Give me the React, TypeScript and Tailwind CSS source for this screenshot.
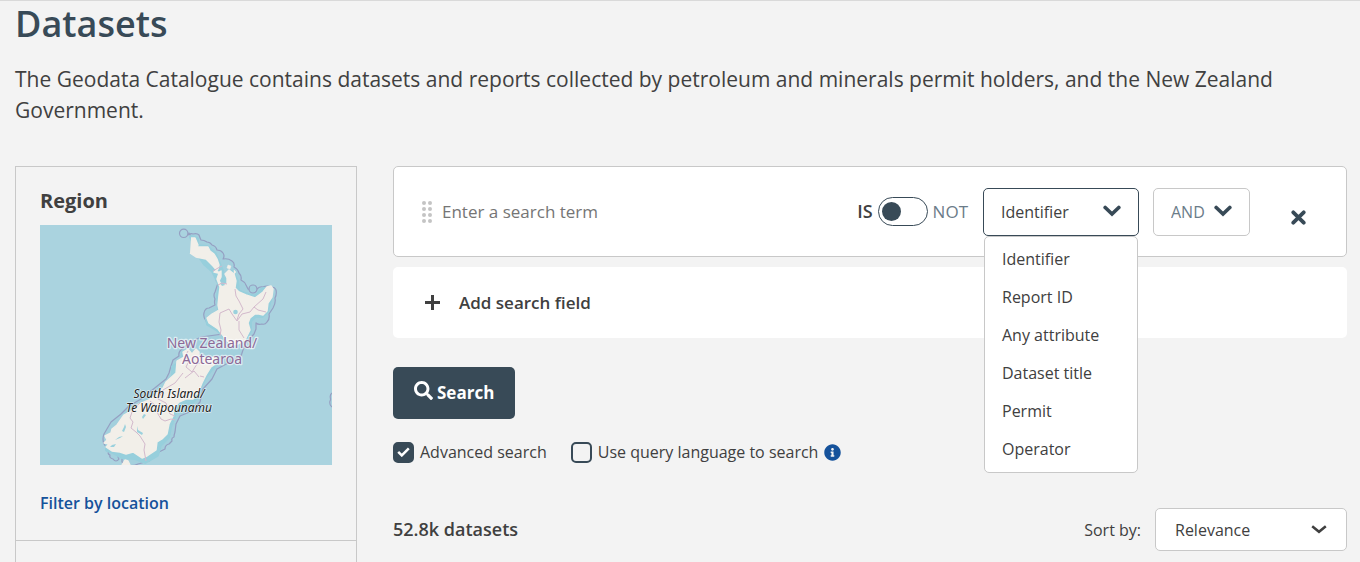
import { useState } from "react";
import { FaInfoCircle, FaSearch } from "react-icons/fa";

const FIELDS = ["Identifier", "Report ID", "Any attribute", "Dataset title", "Permit", "Operator"];

function Chevron({ className }: { className: string }) {
  return (
    <svg viewBox="0 0 18 12" fill="none" stroke="currentColor" className={className} aria-hidden="true">
      <path d="M2.2 2.5 9 9 15.8 2.5" strokeWidth="3.7" strokeLinecap="round" />
    </svg>
  );
}

function RegionMap() {
  return (
    <svg viewBox="0 0 292 240" className="block w-full" role="img" aria-label="Map of New Zealand">
      <rect width="292" height="240" fill="#aad3df" />
      {/* maritime boundary */}
      <g fill="#a3d0dd" stroke="#959fc2" strokeWidth="1.2" strokeLinejoin="round">
        <path d="M148 10q3-2 5-1 4-1 6 1 1 3 2 5 3 0 6 2 3 0 5 3 4 1 5 5 4 0 6 3 2 3 0 6 5-1 9 2 3 2 2 6 4 2 5 6 3 3 2 7 4 2 5 5l2 4q4 2 9 0 3-3 6-2 4-2 8 0 4 0 5 3 1 4-1 8 1 5-2 10l-4 6q1 5-2 8-2 3-5 2-4 1-6-1l0 6-2 5-9 10-4 12-11 6-13 7-5 10-9 10-3 13-8 9-12 5-4 8-1 8q-1 3-1 5-3 1-2 4l-3 3q-4 1-4 5l-6 3q-2 4-6 5l-4 4-11 3q-9 4-16-2l0-3q2-4-3-5-2 2 0 5-3 4-6 0-4-1-3-4-3-1-1-4l-5-7q-2-5 0-10l7-12 10-8 8-8 12-7 15-12 10-8 3-6 2-7 2-6 6-4q-1-4 3-7l7-6 12-6 22-3-9-7-8-6q-3-4-2-8 1-5 5-5l6-3q-1-3 0-6-2-4 0-7l3-9q-3-3-2-6-1-4-2-5-3-1-3-4l-7-6-9-15q-2-2-1-5l-5-9z" />
        <circle cx="143.7" cy="8.3" r="4.2" fill="#aad3df" />
        <circle cx="213" cy="64" r="4" />
      </g>
      {/* shallow water around the coast, then the land itself */}
      <g strokeLinejoin="round">
        <g stroke="#97cfdc" strokeWidth="4" fill="#97cfdc">
          <path d="m151 12 6 2 0 7 10 1 8 7 5 12 2 5 1 8 4 3 0-8 5-2 5 9 1 10 7 3 10 3 8-8 7 0 1 7-4 15-5 5-7 0-5 5 0 10-5 8-8 3-7 2-5-7-7-7-10-6-1-5 6-4 6-4-1-15 2-10-3-7-4-8-8-7-7-10-3-8z" />
          <path d="m143 127 5-1 7 6 10 3 10-2-2 9-8 10-5 10-3 10-5 5-14 3-3 8-5 14-2 10-8 8-3 10-12 7-10-4-13-1-7-4-8-3 1-12 12-11 12-12 13-8 17-17 11-13 0-10 9-5z" />
        </g>
        <g fill="#f2efe9" stroke="#f2efe9" strokeWidth="1.4">
          <path d="m151 13 4 0 3 7-1 2 5 0 6 0 2 4 4 3 3 5 2 6-1 4-4 3 4 1 3-2 0 6-2 4 3 4 5-1 0-6-2-4 4-4 5 4 2 7-1 7 4 4 7 3 9 3 8-6 4-5 4-1 2 3-1 8-4 6-1 8-4 4-4-1-4 0-5 4-2 5 2 7-5 10-7 4-7 1-6-7-7-9-9-6-2-5 5-4 7-4-1-5 1-10 1-8-3-8 2-6-6-7-7-7-10-2-6-4-5z" />
          <path d="m143 127 5-3 4 5 4-5 3 3 0 7 3-2 4 2 10-2-2 8-3 2-5 8-4 8-4 10-5 6-7 0-7 3-5 6-1 8-4 8-2 10-5 5-5 3-1 8-9 6-5 2-9-6-7 2-6-2-8-1-6-4 3-3-5-1 3-3-2-4 6-3 1-4 5-4 7-10 7-4 6-6 12-5 14-12 3-6 10-9 1-12 7-4z" />
          <path d="m82 240 3-5 3 1 2 4z" />
          <path d="m188 40 3 1-1 3-3-1zM194 45l2 2-2 2z" strokeWidth="0.5" />
        </g>
      </g>
      {/* lakes and fjords */}
      <g fill="#9bd1dd">
        <circle cx="195.5" cy="87" r="2.3" />
        <path d="m180 58 3-1 2 3-3 1zM84 202l1-3 1 3-2 5-2-1zM79 212l4-1-3 2-5 2zM97 201l1 4 5 3-1 2-5-3zM104 189l2 1-3 4-1-2zM72 220l4-1-2 3-4 0zM115 183l1 3-2 1zM154 172l4-3-2 5z" />
      </g>
      {/* regional boundaries */}
      <g fill="none" stroke="#d3b9cc" strokeWidth="1" strokeLinejoin="round">
        <path d="m173 46 5-3 4-2M178 60l4-2 5 1M195 64l1 7 3 5 4 8-4 5-2 6M226 67l-3 7-9 8-4 5-8 2-5 7-5-7-3-5-9 4-1 9 2 8-1 6M199 96l0 9 5 8M214 82l4 3 8 2M148 126l-3 6 4 4-3 6 6 5 5-8 6-2M145 153l9-7 5 6M143 148l-8 10-12 7-5 9 8 4 4 11 5 2M110 176l6 5 2 8 3 5 4 2 6-2 4 1M100 178l-7 6-3 9 3 4-2 6 5 4 4 4 5 8-1 6 2 11M160 151l4 1" />
      </g>
      <path d="M292 168c-4 3 0 6-2 8-1 4 1 5 2 6" fill="none" stroke="#959fc2" strokeWidth="1.2" />
      <g textAnchor="middle" stroke="#ffffff" strokeOpacity="0.6" strokeLinejoin="round" paintOrder="stroke" className="font-['Noto_Sans',sans-serif]">
        <g fill="#8d6a97" strokeWidth="2.5" className="text-[14px]">
          <text x="172" y="123">New Zealand/</text>
          <text x="172" y="139">Aotearoa</text>
        </g>
        <g fill="#222222" strokeWidth="1.5" className="text-[12px] italic">
          <text x="129" y="173">South Island/</text>
          <text x="129" y="187">Te Waipounamu</text>
        </g>
      </g>
    </svg>
  );
}

function SearchRow() {
  const [field, setField] = useState("Identifier");
  const [open, setOpen] = useState(true);
  return (
    <div className="flex h-[91px] items-center rounded-[5px] border border-[#c8c8c8] bg-white pr-10 pl-7">
      <svg viewBox="0 0 10 22" className="h-[22px] w-[10px] shrink-0" fill="#c4c4c4" aria-hidden="true">
        {[2, 8, 14, 20].map((y) => (
          <g key={y}>
            <circle cx="2" cy={y} r="2" />
            <circle cx="8" cy={y} r="2" />
          </g>
        ))}
      </svg>
      <input
        type="text"
        aria-label="Search term"
        placeholder="Enter a search term"
        className="ml-[10px] min-w-0 flex-1 text-[17px] outline-none placeholder:text-[#757575]"
      />
      <label htmlFor="negate" className="text-[18px] font-semibold text-[#404040]">IS</label>
      <input
        id="negate"
        type="checkbox"
        role="switch"
        className="mx-[5px] h-[29px] w-[50px] shrink-0 appearance-none rounded-full border border-[#384a57] px-[3px] py-1 before:block before:size-[19px] before:rounded-full before:bg-[#384a57] checked:before:ml-[21px]"
      />
      <label htmlFor="negate" className="text-[17px] text-[#6b7c89]">NOT</label>
      <div className="relative ml-[15px] w-[156px] shrink-0">
        <button
          type="button"
          aria-haspopup="listbox"
          aria-expanded={open}
          onClick={() => setOpen(!open)}
          className="flex h-12 w-full items-center justify-between rounded-[5px] border border-[#384a57] px-[17px] text-[16px]"
        >
          {field}
          <Chevron className="mb-[2px] h-3 w-[18px] text-[#384a57]" />
        </button>
        {open && (
          <ul role="listbox" aria-label="Search field" className="absolute inset-x-px top-full z-10 rounded-[5px] border border-[#c8c8c8] bg-white pt-[3px] pb-1">
            {FIELDS.map((name) => (
              <li
                key={name}
                role="option"
                aria-selected={name === field}
                onClick={() => {
                  setField(name);
                  setOpen(false);
                }}
                className="flex h-[38px] items-center px-[17px] text-[16px]"
              >
                {name}
              </li>
            ))}
          </ul>
        )}
      </div>
      <div className="relative ml-[14px] w-[97px] shrink-0">
        <select aria-label="Combine with" className="h-12 w-full appearance-none rounded-[5px] border border-[#c8c8c8] bg-white pl-[17px] text-[16px] text-[#6b7c89]">
          <option>AND</option>
          <option>OR</option>
        </select>
        <Chevron className="pointer-events-none absolute top-[17px] right-[18px] h-3 w-[18px] text-[#384a57]" />
      </div>
      <button type="button" aria-label="Remove search field" className="mt-3 ml-[41px] text-[#384a57]">
        <svg viewBox="0 0 15 15" className="size-[15px]" fill="none" stroke="currentColor" strokeWidth="3.8" strokeLinecap="round" aria-hidden="true">
          <path d="m2.3 2.3 10.4 10.4M12.7 2.3 2.3 12.7" />
        </svg>
      </button>
    </div>
  );
}

function CheckOption({ id, label, defaultChecked }: { id: string; label: string; defaultChecked?: boolean }) {
  return (
    <div className="flex items-center">
      <span className="relative flex">
        <input
          id={id}
          type="checkbox"
          defaultChecked={defaultChecked}
          className="peer size-[21px] appearance-none rounded-[5px] border-2 border-[#384a57] checked:bg-[#384a57]"
        />
        <svg viewBox="0 0 13 10" className="pointer-events-none absolute top-[5px] left-1 hidden h-[10px] w-[13px] peer-checked:block" fill="none" stroke="#ffffff" strokeWidth="2.5" aria-hidden="true">
          <path d="m1.2 4.8 3.6 3.6L11.8 1.4" />
        </svg>
      </span>
      <label htmlFor={id} className="ml-[6px] text-[16px]">{label}</label>
    </div>
  );
}

export default function App() {
  return (
    <div className="flex min-h-screen flex-col border-t border-[#d9d9d9] bg-[#f3f3f3] pr-[13px] pl-[15px] font-['Open_Sans','Noto_Sans',sans-serif] text-[#404040]">
      <h1 className="text-[36px] leading-[46px] font-semibold text-[#384a57]">Datasets</h1>
      <p className="mt-[17px] text-[21px] leading-[31px]">
        The Geodata Catalogue contains datasets and reports collected by petroleum and minerals permit holders, and the New Zealand Government.
      </p>
      <div className="mt-10 flex grow gap-9">
        <aside className="w-[342px] shrink-0 border border-b-0 border-[#c8c8c8]">
          <section className="border-b border-[#c8c8c8] px-6 pt-[19px] pb-[25px]">
            <h2 className="text-[20px] leading-[30px] font-bold">Region</h2>
            <div className="mt-[9px]">
              <RegionMap />
            </div>
            <a href="#location" className="mt-[26px] block text-[16px] leading-6 font-semibold text-[#15529b]">Filter by location</a>
          </section>
        </aside>
        <main className="min-w-0 flex-1">
          <SearchRow />
          <button type="button" className="mt-[10px] flex h-[71px] w-full items-center rounded-[5px] bg-white pl-8 text-[17px] font-semibold">
            <svg viewBox="0 0 15 15" className="mr-[19px] size-[15px]" stroke="currentColor" strokeWidth="3" aria-hidden="true">
              <path d="M0 7.5H15M7.5 0V15" />
            </svg>
            Add search field
          </button>
          <button type="submit" className="mt-[29px] flex h-[52px] items-center gap-1 rounded-[5px] bg-[#384a57] px-[21px] text-[17px] font-bold text-white">
            <FaSearch className="mb-[5px] size-[19px]" />
            Search
          </button>
          <div className="mt-[21px] flex items-center">
            <CheckOption id="advanced" label="Advanced search" defaultChecked />
            <div className="ml-6 flex items-center gap-[6px]">
              <CheckOption id="query-language" label="Use query language to search" />
              <FaInfoCircle className="size-[17px] text-[#15529b]" />
            </div>
          </div>
          <div className="mt-11 flex items-center justify-between">
            <h2 className="text-[18px] font-semibold">52.8k datasets</h2>
            <div className="flex items-center gap-[14px] text-[16px]">
              <label htmlFor="sort">Sort by:</label>
              <div className="relative w-48">
                <select id="sort" className="h-[43px] w-full appearance-none rounded-[5px] border border-[#c8c8c8] bg-white pl-[19px]">
                  <option>Relevance</option>
                  <option>Date</option>
                </select>
                <svg viewBox="0 0 16 9" className="pointer-events-none absolute top-[17px] right-5 h-[9px] w-4" fill="none" stroke="currentColor" strokeWidth="2.5" aria-hidden="true">
                  <path d="M1.2 1.2 8 6.8 14.8 1.2" />
                </svg>
              </div>
            </div>
          </div>
        </main>
      </div>
    </div>
  );
}
